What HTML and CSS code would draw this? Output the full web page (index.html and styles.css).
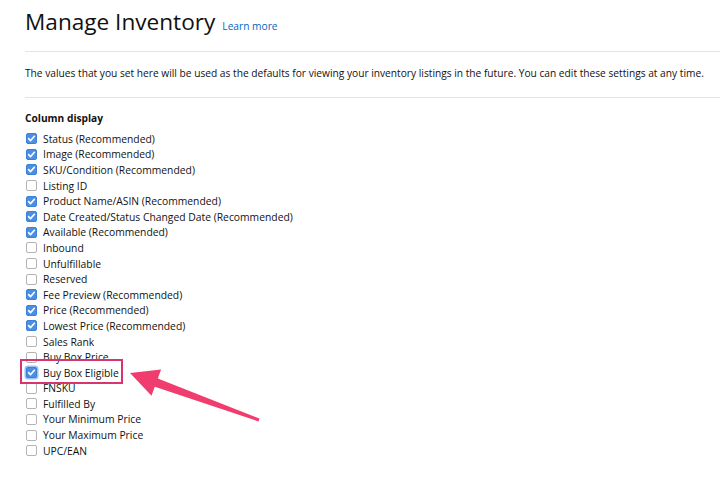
FILE: index.html
```html
<!DOCTYPE html>
<html>
<head>
<meta charset="utf-8">
<link rel="stylesheet" href="styles.css">
</head>
<body>
<div class="page">
  <div class="title-row">
    <h1 class="title">Manage Inventory</h1>
    <a class="learn" href="#">Learn more</a>
  </div>
  <hr class="rule">
  <p class="desc">The values that you set here will be used as the defaults for viewing your inventory listings in the future. You can edit these settings at any time.</p>
  <hr class="rule">
  <h2 class="section">Column display</h2>
  <ul class="cols">
    <li class="item"><span class="cb on"></span>Status (Recommended)</li>
    <li class="item"><span class="cb on"></span>Image (Recommended)</li>
    <li class="item"><span class="cb on"></span>SKU/Condition (Recommended)</li>
    <li class="item"><span class="cb"></span>Listing ID</li>
    <li class="item"><span class="cb on"></span>Product Name/ASIN (Recommended)</li>
    <li class="item"><span class="cb on"></span>Date Created/Status Changed Date (Recommended)</li>
    <li class="item"><span class="cb on"></span>Available (Recommended)</li>
    <li class="item"><span class="cb"></span>Inbound</li>
    <li class="item"><span class="cb"></span>Unfulfillable</li>
    <li class="item"><span class="cb"></span>Reserved</li>
    <li class="item"><span class="cb on"></span>Fee Preview (Recommended)</li>
    <li class="item"><span class="cb on"></span>Price (Recommended)</li>
    <li class="item"><span class="cb on"></span>Lowest Price (Recommended)</li>
    <li class="item"><span class="cb"></span>Sales Rank</li>
    <li class="item"><span class="cb"></span>Buy Box Price</li>
    <li class="item highlight"><span class="cb on focus"></span>Buy Box Eligible</li>
    <li class="item"><span class="cb"></span>FNSKU</li>
    <li class="item"><span class="cb"></span>Fulfilled By</li>
    <li class="item"><span class="cb"></span>Your Minimum Price</li>
    <li class="item"><span class="cb"></span>Your Maximum Price</li>
    <li class="item"><span class="cb"></span>UPC/EAN</li>
  </ul>
  <svg class="arrow" width="726" height="478" viewBox="0 0 726 478">
    <polygon points="130,373 161.1,369.5 157.8,378.4 259.5,418.6 258.5,421.4 154.8,386.8 151.5,395.7" fill="#f03c6e"/>
  </svg>
</div>
</body>
</html>
```
FILE: styles.css
```css
html, body {
  margin: 0;
  padding: 0;
  background: #ffffff;
}
.page {
  position: relative;
  padding: 6px 6px 0 25px;
  font-family: "Open Sans", "Noto Sans", sans-serif;
  color: #111111;
  height: 472px;
  overflow: hidden;
}
.title-row {
  display: flex;
  align-items: baseline;
  gap: 7px;
}
.title {
  margin: 0;
  font-size: 22.6px;
  font-weight: 400;
  line-height: 32px;
}
.learn {
  font-size: 10.2px;
  color: #0066c0;
  text-decoration: none;
}
.rule {
  border: 0;
  border-top: 1px solid #e4e4e4;
  margin: 13px 0 0 0;
}
.desc {
  margin: 0;
  padding: 14px 0 17px 0;
  font-size: 10.2px;
  line-height: 14px;
  white-space: nowrap;
}
.desc + .rule {
  margin-top: 0;
}
.section {
  margin: 13px 0 6px 0;
  font-size: 10.2px;
  font-weight: 700;
  line-height: 14px;
}
.cols {
  list-style: none;
  margin: 0;
  padding: 0;
}
.item {
  display: flex;
  align-items: center;
  height: 15.6px;
  font-size: 10.33px;
  white-space: nowrap;
}
.cb {
  box-sizing: border-box;
  width: 11px;
  height: 11px;
  margin: 0 6px 0 1px;
  border: 1px solid #b4b4b4;
  border-radius: 2px;
  background: #ffffff;
  flex: none;
}
.cb.on {
  border-color: #3b7fd6;
  background: #4a8fe3 url("data:image/svg+xml;utf8,<svg xmlns='http://www.w3.org/2000/svg' viewBox='0 0 11 11'><path d='M2.6 5.6 L4.5 7.6 L8.4 3.3' fill='none' stroke='white' stroke-width='1.6' stroke-linecap='round' stroke-linejoin='round'/></svg>") center/11px 11px no-repeat;
}
.cb.focus {
  box-shadow: 0 0 0 1.5px #9cc4f2;
}
.highlight {
  position: relative;
  width: fit-content;
}
.highlight::after {
  content: "";
  position: absolute;
  left: -5px;
  top: -6px;
  right: -4px;
  bottom: -3px;
  border: 2px solid #d8356c;
}
.arrow {
  position: absolute;
  left: 0;
  top: 0;
  pointer-events: none;
}
```
